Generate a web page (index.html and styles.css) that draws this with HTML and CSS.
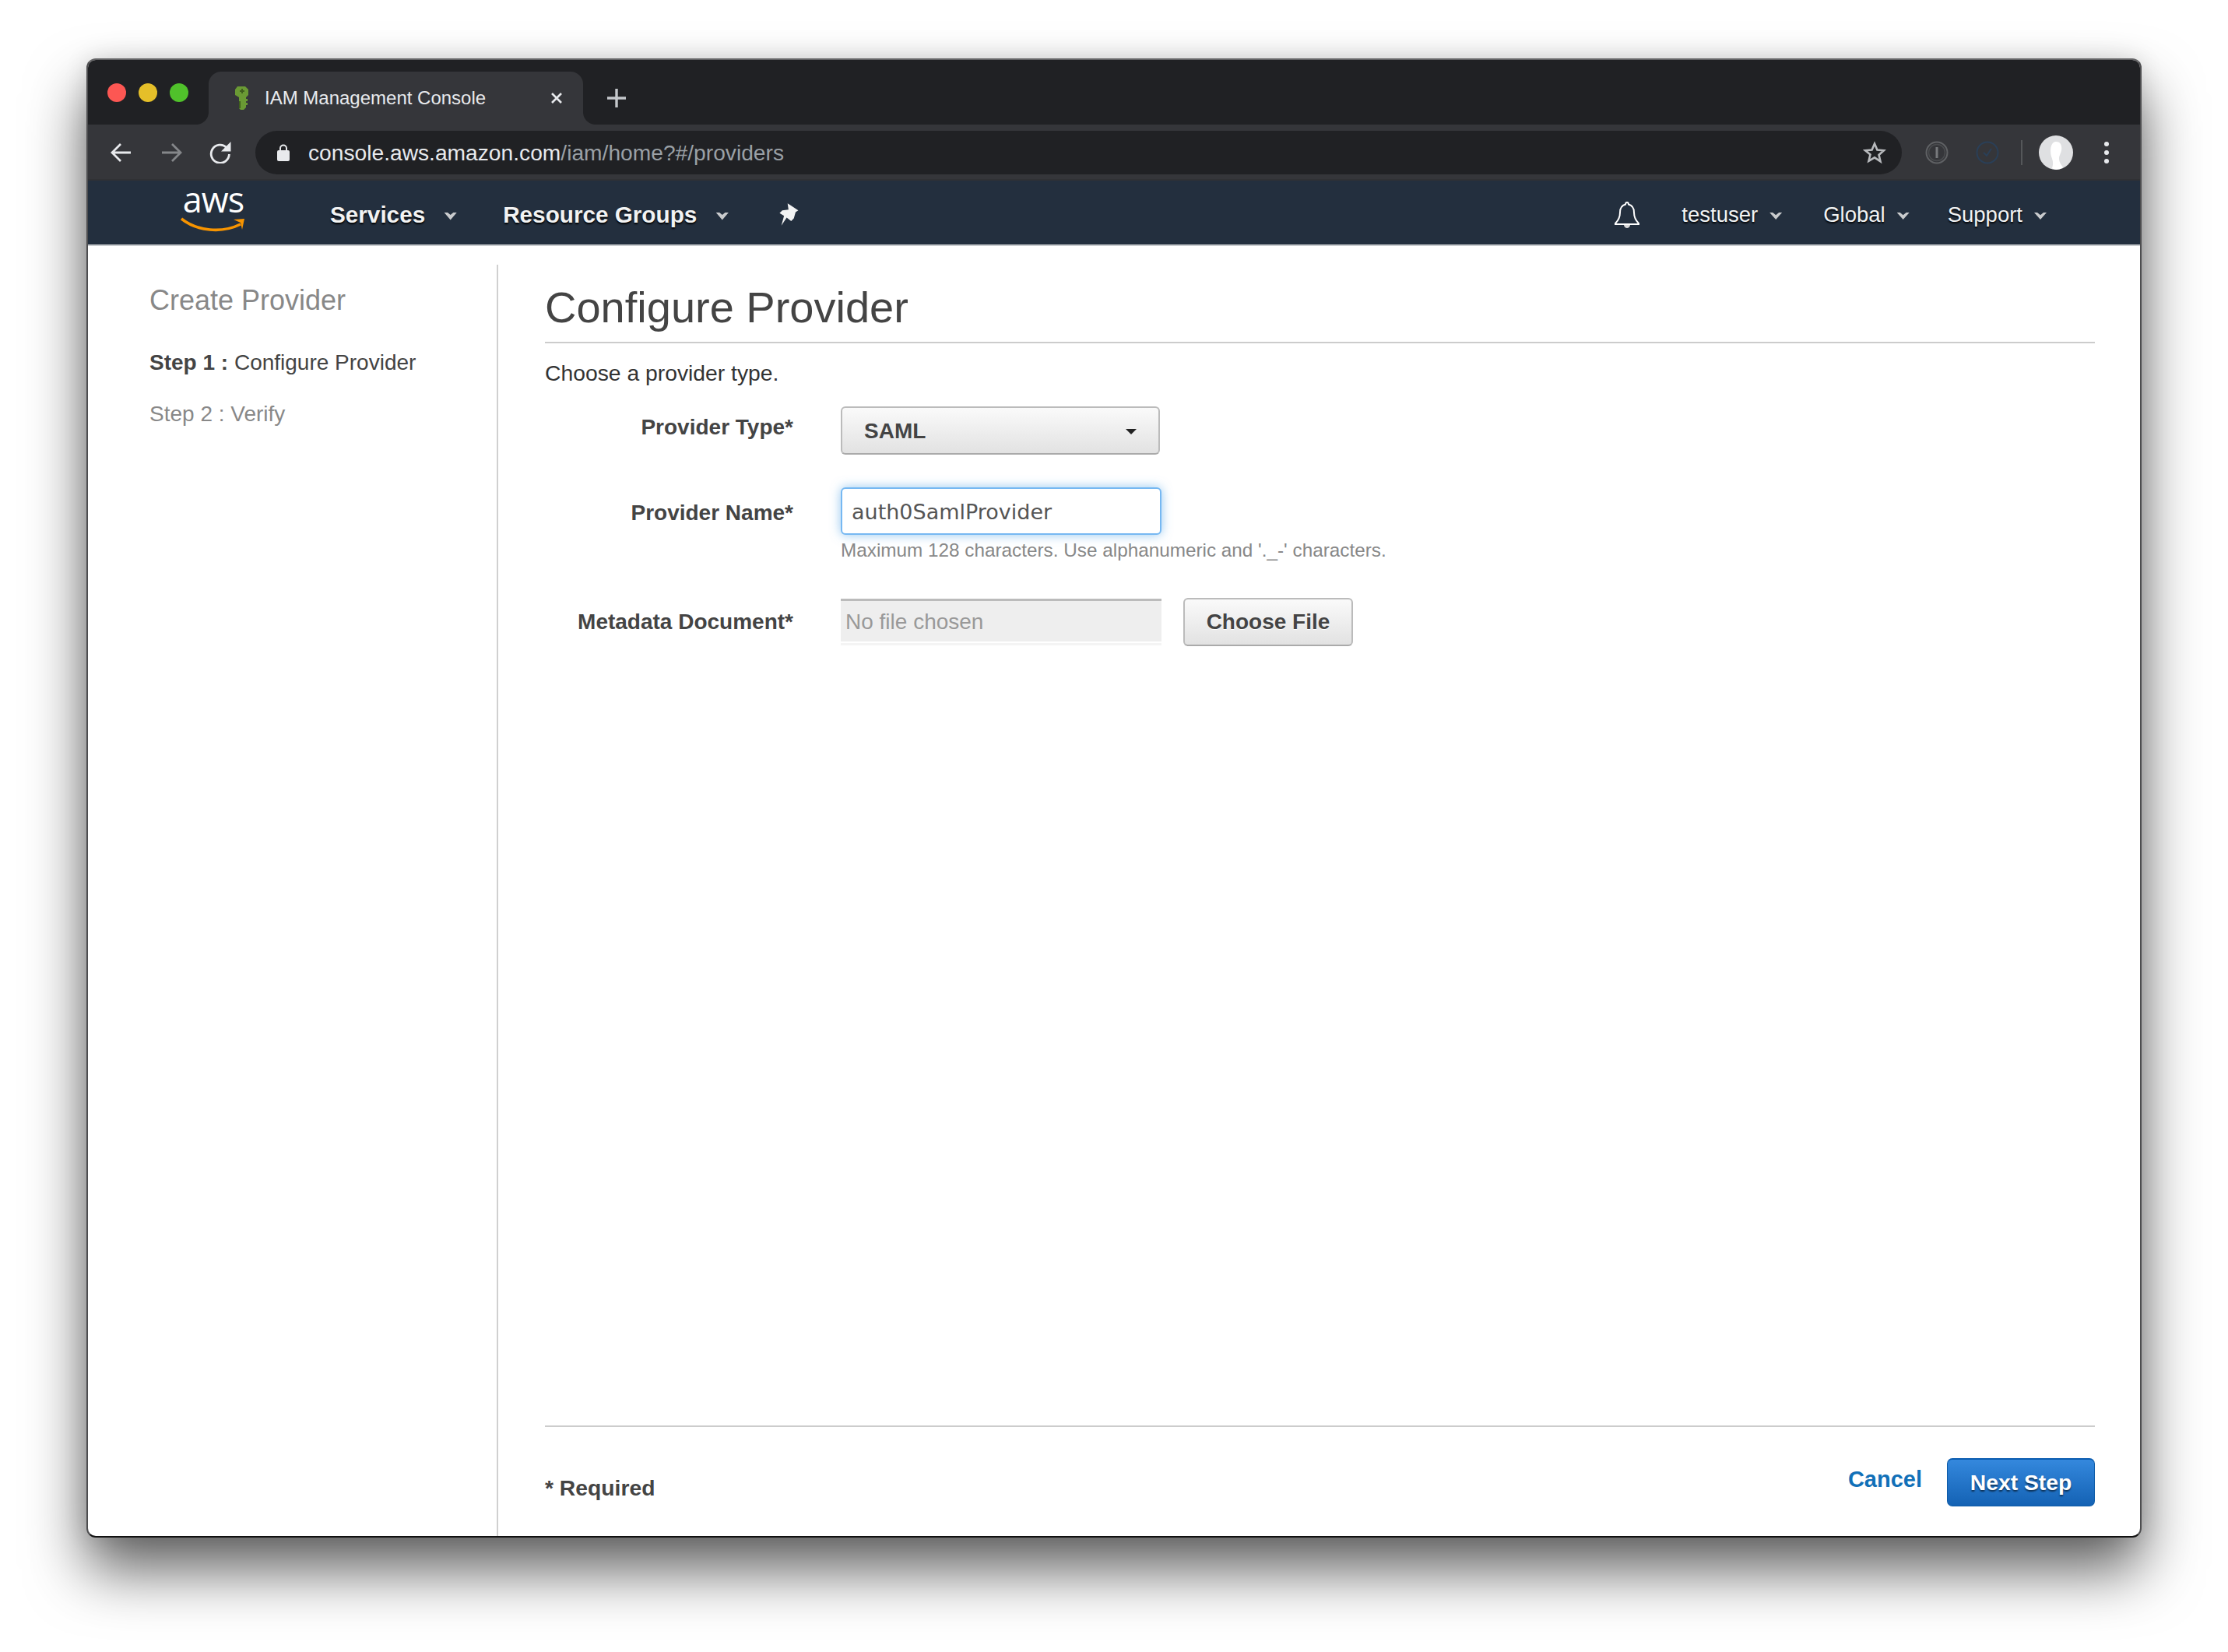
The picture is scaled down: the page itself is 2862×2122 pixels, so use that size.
FILE: index.html
```html
<!DOCTYPE html>
<html>
<head>
    <title>IAM Management Console</title>
    <link rel="stylesheet" href="styles.css">
</head>
<body>
    <div class="window">
        <div class="tabstrip">
            <div class="lights">
                <span class="light red"></span>
                <span class="light yellow"></span>
                <span class="light green"></span>
            </div>
            <div class="tab">
                <svg class="favicon" width="20" height="32" viewBox="0 0 20 32">
                    <path fill="#6a9a34" d="M5 1h10l4 4v7l-3 3v2h2v3h-2v2h2v3h-2v3l-3 3H9l-2-2V15l-5-3V5z"/>
                    <path fill="#3f5f1d" d="M7 20h2v9H7zM8 6h2V4h2v2h2v2h-2v2h-2V8H8z"/>
                </svg>
                <span class="tab-title">IAM Management Console</span>
                <svg class="tab-close" width="18" height="18" viewBox="0 0 18 18">
                    <path d="M3 3l12 12M15 3L3 15" stroke="#e8eaed" stroke-width="2.6" fill="none"/>
                </svg>
            </div>
            <svg class="new-tab" width="26" height="26" viewBox="0 0 26 26">
                <path d="M13 1v24M1 13h24" stroke="#c4c7cb" stroke-width="3.4" fill="none"/>
            </svg>
        </div>

        <div class="toolbar">
            <svg class="nav-icon" width="28" height="26" viewBox="0 0 28 26">
                <path d="M27 13H3M14 2L3 13l11 11" stroke="#e8eaed" stroke-width="2.8" fill="none"/>
            </svg>
            <svg class="nav-icon dim" width="28" height="26" viewBox="0 0 28 26">
                <path d="M1 13h24M14 2l11 11-11 11" stroke="#85878a" stroke-width="2.8" fill="none"/>
            </svg>
            <svg class="nav-icon" width="28" height="28" viewBox="0 0 28 28">
                <path d="M22 7.500A11.600 11.600 0 1 0 25.400 16" stroke="#e8eaed" stroke-width="2.800" fill="none"/>
                <path d="M27.500 0v12.500H15z" fill="#e8eaed"/>
            </svg>
            <div class="omnibox">
                <svg class="lock" width="16" height="22" viewBox="0 0 16 22">
                    <path d="M4 9V5.500a4 4 0 0 1 8 0V9" stroke="#e8eaed" stroke-width="2" fill="none"/>
                    <rect y="8" width="16" height="14" rx="2" fill="#e8eaed"/>
                </svg>
                <span class="url">console.aws.amazon.com<span class="url-path">/iam/home?#/providers</span></span>
                <svg class="star" width="30" height="30" viewBox="0 0 30 30">
                    <path d="M15 3.500l3.400 8 8.600.7-6.500 5.700 2 8.400L15 21.300 7.500 25.800l2-8.400L3 12.200l8.600-.7z" stroke="#b8babd" stroke-width="2.600" fill="none"/>
                </svg>
            </div>
            <svg class="ext" width="30" height="30" viewBox="0 0 30 30">
                <circle cx="15" cy="15" r="13.500" stroke="#5f6164" stroke-width="2" fill="none"/>
                <circle cx="15" cy="15" r="10.500" stroke="#4a4c4f" stroke-width="1.500" fill="none"/>
                <path d="M15 8v14" stroke="#77797c" stroke-width="3"/>
            </svg>
            <svg class="ext ext-check" width="30" height="30" viewBox="0 0 30 30">
                <circle cx="15" cy="15" r="13.500" stroke="#2a3f57" stroke-width="2" fill="none"/>
                <path d="M10 15l4 4 6-9" stroke="#2a3f57" stroke-width="2" fill="none"/>
            </svg>
            <span class="toolbar-sep"></span>
            <svg class="avatar" width="44" height="44" viewBox="0 0 44 44">
                <circle cx="22" cy="22" r="22" fill="#dfe0e2"/>
                <path d="M22 8c6 0 8 5 7 11-1 5-3 7-3 11 0 4 3 8 5 11-5 4-12 3-14 1 2-6 1-10-1-15-2-7-1-19 6-19z" fill="#fff"/>
            </svg>
            <div class="kebab"><span></span><span></span><span></span></div>
        </div>

        <div class="navbar">
            <div class="aws-logo">
                <span class="aws-word">aws</span>
                <svg class="aws-smile" width="84" height="20" viewBox="0 0 84 20">
                    <path d="M1 2c20 16 52 19 76 7" stroke="#f79400" stroke-width="3.600" fill="none"/>
                    <path d="M68 3l14-1-3 14-2-9z" fill="#f79400"/>
                </svg>
            </div>
            <span class="nav-item strong services">Services</span><span class="caret"></span>
            <span class="nav-item strong groups">Resource Groups</span><span class="caret"></span>
            <svg class="pin" width="30" height="32" viewBox="0 0 26 28">
                <path d="M11 1l12 8-3 2-2 7-3 3-5-4-6 9 3-11-5-3 3-3 7-1z" fill="#f2f3f3"/>
            </svg>
            <svg class="bell" width="34" height="36" viewBox="0 0 34 36">
                <path d="M17 2c-1.500 0-2 1-2 2.500C9.500 6 8 10 8 15c0 6-2 10-6 14v1h30v-1c-4-4-6-8-6-14 0-5-1.500-9-7-10.500C19 3 18.500 2 17 2z" stroke="#fff" stroke-width="2" fill="none"/>
                <path d="M13 31c0 2 2 4 4 4s4-2 4-4z" fill="#d9d9d9"/>
            </svg>
            <span class="nav-item user">testuser</span><span class="caret small"></span>
            <span class="nav-item region">Global</span><span class="caret small"></span>
            <span class="nav-item support">Support</span><span class="caret small"></span>
        </div>

        <div class="page">
            <div class="sidebar">
                <div class="side-title">Create Provider</div>
                <div class="side-step current"><b>Step 1 :</b> Configure Provider</div>
                <div class="side-step">Step 2 : Verify</div>
            </div>
            <div class="content">
                <h1>Configure Provider</h1>
                <p class="intro">Choose a provider type.</p>
                <div class="form-row row-type">
                    <label class="type-label">Provider Type*</label>
                    <button class="btn select-btn">SAML<span class="select-caret"></span></button>
                </div>
                <div class="form-row row-name">
                    <label class="name-label">Provider Name*</label>
                    <input class="text-input" type="text" value="auth0SamlProvider">
                </div>
                <div class="hint">Maximum 128 characters. Use alphanumeric and '._-' characters.</div>
                <div class="form-row row-file">
                    <label>Metadata Document*</label>
                    <div class="file-box">No file chosen</div>
                    <button class="btn file-btn">Choose File</button>
                </div>
                <div class="footer">
                    <span class="required">* Required</span>
                    <a class="cancel">Cancel</a>
                    <button class="next-btn">Next Step</button>
                </div>
            </div>
        </div>
    </div>
</body>
</html>
```

FILE: styles.css
```css
body {
    margin: 0;
    background: #fff;
    font-family: 'Liberation Sans', Arial, sans-serif;
    color: #444;
    height: 2122px;
    overflow: hidden;
}

.window {
    box-sizing: border-box;
    width: 2640px;
    height: 1900px;
    margin: 75px 111px 0;
    display: flex;
    flex-direction: column;
    border: 2px solid #4d4d4f;
    border-top-color: #636365;
    border-bottom-color: #111;
    border-radius: 12px;
    overflow: hidden;
    background: #fff;
    box-shadow: 0 42px 76px rgba(0, 0, 0, 0.62), 0 0 30px rgba(0, 0, 0, 0.12);
}

/* browser chrome */
.tabstrip {
    height: 83px;
    flex: none;
    display: flex;
    align-items: flex-end;
    background: #202124;
}

.lights {
    display: flex;
    gap: 16px;
    padding: 0 0 29px 25px;
    width: 130px;
}

.light {
    width: 24px;
    height: 24px;
    border-radius: 50%;
}

.red { background: #fc5753; }
.yellow { background: #e5bf29; }
.green { background: #50c12b; }

.tab {
    position: relative;
    box-sizing: border-box;
    width: 481px;
    height: 68px;
    display: flex;
    align-items: center;
    padding: 0 25px 0 32px;
    background: #35363a;
    border-radius: 16px 16px 0 0;
}

.tab::before,
.tab::after {
    content: "";
    position: absolute;
    bottom: 0;
    width: 16px;
    height: 16px;
}

.tab::before {
    left: -16px;
    background: radial-gradient(circle at 0 0, #202124 15.500px, #35363a 16.500px);
}

.tab::after {
    right: -16px;
    background: radial-gradient(circle at 100% 0, #202124 15.500px, #35363a 16.500px);
}

.tab-title {
    flex: 1;
    margin-left: 20px;
    font-size: 24px;
    color: #e8eaed;
    white-space: nowrap;
}

.new-tab {
    margin: 0 0 21px 30px;
}

.toolbar {
    height: 72px;
    flex: none;
    display: flex;
    align-items: center;
    background: #35363a;
    padding-left: 28px;
    box-shadow: inset 0 -2px 0 #303134;
}

.nav-icon { margin-right: 8px; margin-left: 0; width: 28px; flex: none; }
.nav-icon.dim { margin-left: 30px; margin-right: 34px; }

.omnibox {
    box-sizing: border-box;
    width: 2115px;
    height: 56px;
    margin-left: 23px;
    display: flex;
    align-items: center;
    padding: 0 20px 0 28px;
    background: #202124;
    border-radius: 28px;
}

.url {
    flex: 1;
    margin-left: 24px;
    font-size: 28.200px;
    color: #e8eaed;
    white-space: nowrap;
}

.url-path { color: #9aa0a6; }

.ext { margin-left: 30px; flex: none; }
.ext-check { margin-left: 35px; }

.toolbar-sep {
    width: 2px;
    height: 32px;
    margin-left: 28px;
    background: #55575a;
}

.avatar { margin-left: 21px; flex: none; }

.kebab {
    display: flex;
    flex-direction: column;
    gap: 5px;
    margin-left: 40px;
}

.kebab span {
    width: 6px;
    height: 6px;
    border-radius: 50%;
    background: #e8eaed;
}

/* aws console header */
.navbar {
    height: 84px;
    flex: none;
    display: flex;
    align-items: center;
    padding: 5px 120px 0 0;
    background: #232f3e;
    color: #f2f3f3;
    border-bottom: 2px solid #c9cccf;
    box-sizing: border-box;
}

.aws-logo {
    display: flex;
    flex-direction: column;
    align-items: center;
    width: 84px;
    margin-left: 119px;
    margin-bottom: 14px;
}

.aws-word {
    font-family: 'Open Sans', sans-serif;
    font-size: 45px;
    line-height: 36px;
    height: 41px;
    color: #fff;
    letter-spacing: -1px;
}

.aws-smile { display: block; }

.nav-item {
    font-size: 27.500px;
    text-shadow: 0 2px 2px rgba(0, 0, 0, 0.9);
    white-space: nowrap;
}

.nav-item.strong {
    font-size: 29.700px;
    font-weight: bold;
}

.services { margin-left: 108px; }
.groups { margin-left: 59px; }
.user { margin-left: 53px; }
.region { margin-left: 53px; }
.support { margin-left: 49px; }

.caret {
    width: 17px;
    height: 10px;
    margin: 4px 0 0 24px;
    background: #c9cbcd;
    clip-path: polygon(0 0, 25% 0, 50% 35%, 75% 0, 100% 0, 50% 100%);
}

.caret.small {
    width: 16px;
    height: 9px;
    margin-left: 15px;
}

.pin { margin-left: 63px; margin-right: auto; }

/* page */
.page {
    flex: 1;
    display: flex;
    min-height: 0;
}

.sidebar {
    box-sizing: border-box;
    width: 527px;
    flex: none;
    margin-top: 24px;
    padding: 0 0 0 79px;
    border-right: 2px solid #d0d0d0;
}

.side-title {
    font-size: 36px;
    line-height: 42px;
    margin-top: 25px;
    color: #888;
}

.side-step {
    font-size: 28px;
    line-height: 36px;
    margin-top: 30px;
    color: #888;
}

.side-step.current {
    margin-top: 41px;
    color: #444;
}

.content {
    flex: 1;
    display: flex;
    flex-direction: column;
    padding: 0 58px 0 60px;
}

h1 {
    margin: 44px 0 0;
    padding-bottom: 9px;
    font-size: 56px;
    line-height: 70px;
    font-weight: normal;
    color: #444;
    border-bottom: 2px solid #ccc;
}

.intro {
    margin: 21px 0 0;
    font-size: 28.300px;
    line-height: 34px;
    color: #333;
}

.form-row {
    display: flex;
    align-items: center;
}

.form-row label {
    width: 319px;
    flex: none;
    text-align: right;
    font-size: 28px;
    font-weight: bold;
    margin-right: 61px;
    white-space: nowrap;
}

.row-type { margin-top: 26px; }
.row-name { margin-top: 42px; }
.row-file { margin-top: 43px; }

.type-label { position: relative; top: -4px; }
.form-row .name-label { padding-top: 4px; }

.btn {
    box-sizing: border-box;
    border: 2px solid #bbb;
    border-bottom-color: #aaa;
    border-radius: 6px;
    background: linear-gradient(#fafafa, #e2e2e2);
    font-family: 'Liberation Sans', Arial, sans-serif;
    font-size: 28px;
    font-weight: bold;
    color: #444;
    text-shadow: 0 1px 0 #fff;
    padding: 0;
}

.select-btn {
    width: 410px;
    height: 62px;
    display: flex;
    align-items: center;
    justify-content: space-between;
    padding: 2px 28px 0;
}

.select-caret {
    width: 0;
    height: 0;
    border-left: 7px solid transparent;
    border-right: 7px solid transparent;
    border-top: 7px solid #222;
}

.text-input {
    box-sizing: border-box;
    width: 412px;
    height: 61px;
    padding: 2px 12px 0;
    border: 2px solid #76b8f2;
    border-radius: 6px;
    outline: none;
    background: #fff;
    box-shadow: 0 0 14px rgba(102, 175, 233, 0.7);
    font-family: 'DejaVu Sans', sans-serif;
    font-size: 27px;
    color: #555;
}

.hint {
    margin: 2px 0 0 380px;
    font-size: 24.300px;
    line-height: 36px;
    color: #888;
    white-space: nowrap;
}

.file-box {
    box-sizing: border-box;
    width: 412px;
    height: 60px;
    display: flex;
    align-items: center;
    padding-left: 6px;
    background: #eee;
    border-top: 3px solid #bbb;
    border-bottom: 3px solid #f4f4f4;
    box-shadow: inset 0 -2px 0 #fff;
    font-size: 28px;
    color: #999;
}

.file-btn {
    width: 218px;
    height: 62px;
    margin-left: 28px;
}

.footer {
    margin-top: auto;
    height: 142px;
    flex: none;
    display: flex;
    align-items: flex-start;
    border-top: 2px solid #ccc;
    box-sizing: border-box;
}

.required {
    margin: 62px auto 0 0;
    font-size: 28.300px;
    font-weight: bold;
}

.cancel {
    margin: 51px 32px 0 0;
    font-size: 29px;
    font-weight: bold;
    color: #1170b8;
}

.next-btn {
    box-sizing: border-box;
    width: 190px;
    height: 62px;
    margin-top: 40px;
    padding: 0;
    border: 1px solid #0d5ba8;
    border-top: 2px solid #0a5cb0;
    border-radius: 7px;
    background: linear-gradient(#3488dd, #1462b4);
    font-family: 'Liberation Sans', Arial, sans-serif;
    font-size: 28.300px;
    font-weight: bold;
    color: #fff;
    text-shadow: 0 2px 2px rgba(0, 0, 0, 0.55);
}
```
